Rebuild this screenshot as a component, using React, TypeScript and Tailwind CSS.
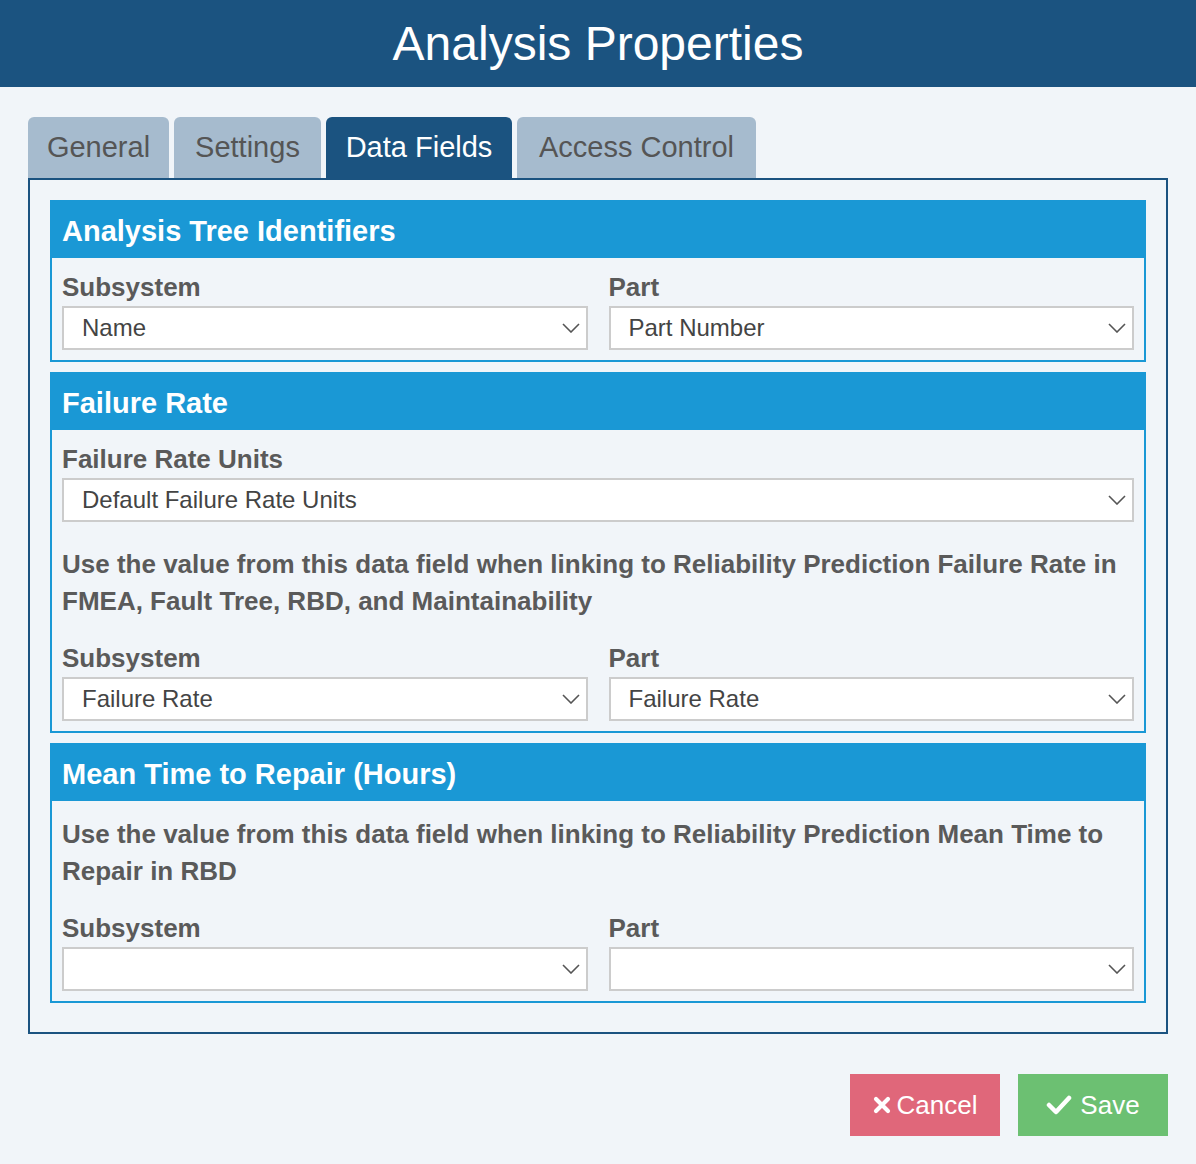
import React from "react";

const font = { fontFamily: '"Liberation Sans", Arial, sans-serif' };

function Chevron() {
  return (
    <svg width="18" height="10" viewBox="0 0 18 10" className="shrink-0">
      <polyline points="1,1 9,9 17,1" fill="none" stroke="#555" strokeWidth="1.6" />
    </svg>
  );
}

function Select({ value }: { value: string }) {
  return (
    <div className="h-[44px] bg-white border-2 border-[#cccccc] flex items-center justify-between pl-[18px] pr-[6px]">
      <span className="text-[24px] text-[#444]">{value}</span>
      <Chevron />
    </div>
  );
}

function Label({ children }: { children: React.ReactNode }) {
  return <div className="text-[26px] font-bold text-[#5a5a5a] leading-[38px]">{children}</div>;
}

function Pair({ sub, part }: { sub: string; part: string }) {
  return (
    <div className="grid grid-cols-2 gap-[21px]">
      <div>
        <Label>Subsystem</Label>
        <Select value={sub} />
      </div>
      <div>
        <Label>Part</Label>
        <Select value={part} />
      </div>
    </div>
  );
}

function Section({ title, children }: { title: string; children: React.ReactNode }) {
  return (
    <div className="border-2 border-[#1a98d5]">
      <div className="bg-[#1a98d5] h-[58px] flex items-center -mx-[2px] -mt-[2px] pl-[12px] pt-[5px]">
        <span className="text-white font-bold text-[29px]">{title}</span>
      </div>
      <div className="px-[10px] pt-[10px] pb-[10px]">{children}</div>
    </div>
  );
}

function Para({ children }: { children: React.ReactNode }) {
  return <div className="text-[26px] font-bold text-[#5a5a5a] leading-[37px]">{children}</div>;
}

const tabs = [
  { t: "General", w: "w-[141px]" },
  { t: "Settings", w: "w-[147px]" },
  { t: "Data Fields", w: "w-[186px]" },
  { t: "Access Control", w: "w-[239px]" },
];

export default function App() {
  return (
    <div style={font} className="w-[1196px] h-[1164px] bg-[#f1f5f9] flex flex-col">
      <div className="h-[87px] bg-[#1b5380] flex items-center justify-center">
        <span className="text-white text-[48px] leading-none">Analysis Properties</span>
      </div>
      <div className="px-[28px] pt-[30px] flex flex-col">
        <div className="flex gap-[5px] h-[61px]">
          {tabs.map(({ t, w }) => (
            <div
              key={t}
              className={
                t === "Data Fields"
                  ? `${w} bg-[#1b5380] text-white rounded-t-[6px] flex items-center justify-center text-[29px]`
                  : `${w} bg-[#a6bbce] text-[#555] rounded-t-[6px] flex items-center justify-center text-[29px]`
              }
            >
              {t}
            </div>
          ))}
        </div>
        <div className="border-2 border-[#1b5380] pt-[20px] px-[20px] pb-[29px] flex flex-col gap-[10px]">
          <Section title="Analysis Tree Identifiers">
            <Pair sub="Name" part="Part Number" />
          </Section>
          <Section title="Failure Rate">
            <Label>Failure Rate Units</Label>
            <Select value="Default Failure Rate Units" />
            <div className="mt-[24px] mb-[19px]">
              <Para>
                Use the value from this data field when linking to Reliability Prediction Failure Rate in FMEA, Fault
                Tree, RBD, and Maintainability
              </Para>
            </div>
            <Pair sub="Failure Rate" part="Failure Rate" />
          </Section>
          <Section title="Mean Time to Repair (Hours)">
            <div className="mt-[5px] mb-[19px] pr-[20px]">
              <Para>
                Use the value from this data field when linking to Reliability Prediction Mean Time to Repair in RBD
              </Para>
            </div>
            <Pair sub="" part="" />
          </Section>
        </div>
        <div className="flex justify-end gap-[18px] mt-[40px]">
          <div className="w-[150px] h-[62px] bg-[#e0677a] text-white flex items-center justify-center gap-[6px] text-[26px]">
            <svg width="18" height="18" viewBox="0 0 18 18">
              <path d="M3 3 L15 15 M15 3 L3 15" stroke="white" strokeWidth="4.2" strokeLinecap="round" />
            </svg>
            <span>Cancel</span>
          </div>
          <div className="w-[150px] h-[62px] bg-[#6cc072] text-white flex items-center justify-center gap-[8px] text-[26px]">
            <svg width="26" height="20" viewBox="0 0 26 20">
              <path d="M3 10 L10 17 L23 3" fill="none" stroke="white" strokeWidth="4.5" strokeLinecap="round" strokeLinejoin="round" />
            </svg>
            <span>Save</span>
          </div>
        </div>
      </div>
    </div>
  );
}
